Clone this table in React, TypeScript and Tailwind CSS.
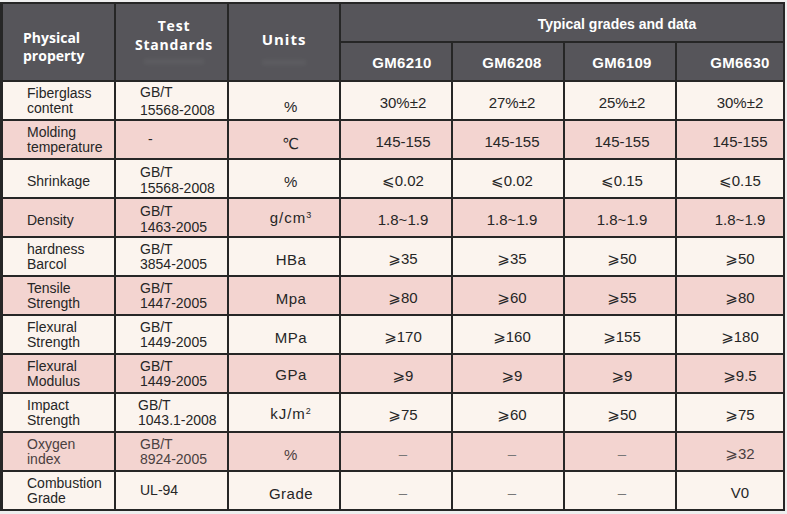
import React from "react";

type Row = {
  p: string[];
  s: string[];
  u: React.ReactNode;
  v: string[];
  sLead?: string;
  uPad?: string;
};

const GE = "\u2A7E";
const LE = "\u2A7D";

const rows: Row[] = [
  { p: ["Fiberglass", "content"], s: ["GB/T", "15568-2008"], sLead: "leading-[18px]", u: "%", uPad: "pt-[14px]", v: ["30%±2", "27%±2", "25%±2", "30%±2"] },
  { p: ["Molding", "temperature"], s: ["-"], u: "℃", uPad: "pt-[10px]", v: ["145-155", "145-155", "145-155", "145-155"] },
  { p: ["Shrinkage"], s: ["GB/T", "15568-2008"], sLead: "leading-[16px] pt-[3px]", u: "%", v: [LE + "0.02", LE + "0.02", LE + "0.15", LE + "0.15"] },
  {
    p: ["Density"],
    s: ["GB/T", "1463-2005"],
    sLead: "leading-[16px] pt-[2px]",
    u: (
      <span className="tracking-[1px]">
        g/cm<sup className="text-[9px] relative -top-[5px]">3</sup>
      </span>
    ),
    uPad: "pt-[2px]",
    v: ["1.8~1.9", "1.8~1.9", "1.8~1.9", "1.8~1.9"],
  },
  { p: ["hardness", "Barcol"], s: ["GB/T", "3854-2005"], u: "HBa", v: [GE + "35", GE + "35", GE + "50", GE + "50"] },
  { p: ["Tensile", "Strength"], s: ["GB/T", "1447-2005"], u: "Mpa", v: [GE + "80", GE + "60", GE + "55", GE + "80"] },
  { p: ["Flexural", "Strength"], s: ["GB/T", "1449-2005"], u: "MPa", v: [GE + "170", GE + "160", GE + "155", GE + "180"] },
  { p: ["Flexural", "Modulus"], s: ["GB/T", "1449-2005"], u: "GPa", uPad: "pt-[3px]", v: [GE + "9", GE + "9", GE + "9", GE + "9.5"] },
  {
    p: ["Impact", "Strength"],
    s: ["GB/T", "1043.1-2008"],
    u: (
      <span className="tracking-[1px]">
        kJ/m<sup className="text-[9px] relative -top-[5px]">2</sup>
      </span>
    ),
    uPad: "pt-[3px]",
    v: [GE + "75", GE + "60", GE + "50", GE + "75"],
  },
  { p: ["Oxygen", "index"], s: ["GB/T", "8924-2005"], u: "%", v: ["–", "–", "–", GE + "32"] },
  { p: ["Combustion", "Grade"], s: ["UL-94"], u: "Grade", v: ["–", "–", "–", "V0"] },
];

const valPad = ["pl-[14px]", "pl-[8px]", "pl-[4px]", "pl-[20px]"];
const headPad = ["pl-[12px]", "pl-[8px]", "pl-[4px]", "pl-[20px]"];
const grades = ["GM6210", "GM6208", "GM6109", "GM6630"];

const bodyFont = { fontFamily: '"Liberation Sans", "DejaVu Sans", "Noto Sans CJK SC", sans-serif' };
const headFont = { fontFamily: '"Open Sans", sans-serif' };

export default function App() {
  return (
    <div className="min-h-screen w-[787px] bg-[#eeeeee] overflow-hidden" style={bodyFont}>
      <div className="mt-[2px] inline-grid grid-cols-[111px_111px_110px_110px_110px_110px_106px] auto-rows-[37px] gap-[2px] bg-[#262626] pl-[3px] pr-[2px] py-[2px]">
        {/* header */}
        <div
          className="row-span-2 bg-[#56555a] flex items-center pl-[20px] pt-[10px] text-white font-bold text-[14px] leading-[18px]"
          style={headFont}
        >
          <div>
            <div>Physical</div>
            <div>property</div>
          </div>
        </div>
        <div
          className="row-span-2 bg-[#56555a] flex flex-col items-center pt-[12px] pl-[5px] text-white font-bold text-[14px] leading-[19px] tracking-[0.8px]"
          style={headFont}
        >
          <div>Test</div>
          <div>Standards</div>
          <div className="mt-[5px] h-[5px] w-[60px] bg-white/5 blur-[2px]" />
        </div>
        <div
          className="row-span-2 bg-[#56555a] flex flex-col items-center pt-[26px] text-white font-bold text-[15px] leading-[18px] tracking-[1px]"
          style={headFont}
        >
          <div>Units</div>
          <div className="mt-[12px] h-[5px] w-[44px] bg-white/5 blur-[2px]" />
        </div>
        <div className="col-span-4 bg-[#56555a] flex items-center justify-center pl-[110px] pt-[4px] text-white font-bold text-[14px]">
          Typical grades and data
        </div>
        {grades.map((g, i) => (
          <div
            key={g}
            className={`bg-[#56555a] flex items-center justify-center pt-[4px] text-white font-bold text-[15px] tracking-[0.3px] ${headPad[i]}`}
          >
            {g}
          </div>
        ))}

        {/* body */}
        {rows.map((r, ri) => {
          const bg = ri % 2 === 0 ? "bg-[#fbf4ee]" : "bg-[#f3d4d0]";
          const txt = ri === 9 ? "text-[#4a4040]" : "text-[#262626]";
          return (
            <React.Fragment key={ri}>
              <div className={`${bg} ${txt} flex items-center pl-[24px] text-[14px] leading-[15px] ${r.p.length === 1 ? "pt-[5px]" : "pt-[1px]"}`}>
                <div>
                  {r.p.map((t) => (
                    <div key={t}>{t}</div>
                  ))}
                </div>
              </div>
              <div className={`${bg} ${txt} flex items-center ${r.s[0] === "-" ? "pl-[32px]" : r.s[1] === "1043.1-2008" ? "pl-[22px]" : "pl-[24px]"} text-[14px] ${r.sLead ?? "leading-[15px]"}`}>
                <div>
                  {r.s.map((t) => (
                    <div key={t}>{t}</div>
                  ))}
                </div>
              </div>
              <div className={`${bg} ${txt} flex items-center justify-center pl-[14px] text-[15px] tracking-[0.5px] ${r.uPad ?? "pt-[7px]"}`}>
                {r.u}
              </div>
              {r.v.map((v, vi) => (
                <div
                  key={vi}
                  className={`${bg} flex items-center justify-center pt-[6px] text-[15px] ${valPad[vi]} ${v === "–" ? "text-[#777]" : txt}`}
                >
                  {v}
                </div>
              ))}
            </React.Fragment>
          );
        })}
      </div>
    </div>
  );
}
